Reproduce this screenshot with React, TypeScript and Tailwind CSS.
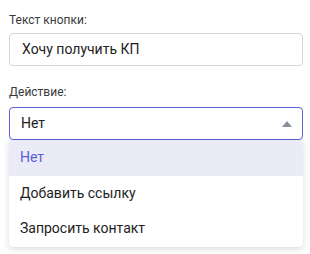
import React from "react";

const options = ["Нет", "Добавить ссылку", "Запросить контакт"];

export default function App() {
  const selected = "Нет";

  return (
    <div className="w-[310px] h-[254px] bg-white px-[9px] pt-[12px] font-['Roboto',sans-serif] text-[#222]">
      <div className="text-[12px] leading-[16px] text-[#3a3a3a]">Текст кнопки:</div>
      <div className="mt-[5px] h-[33px] w-[294px] rounded-[4px] border border-[#d6d6da] flex items-center px-[12px] text-[14px]">
        Хочу получить КП
      </div>

      <div className="mt-[18px] text-[12px] leading-[16px] text-[#3a3a3a]">Действие:</div>
      <div className="relative mt-[7px] w-[294px]">
        <div className="h-[33px] rounded-[4px] border border-[#5b5fd6] flex items-center justify-between pl-[11px] pr-[10px] text-[14px]">
          <span>{selected}</span>
          <svg width="10" height="6" viewBox="0 0 10 6">
            <path d="M0 6 L5 0 L10 6 Z" fill="#8b8e99" />
          </svg>
        </div>
        <div className="absolute left-0 right-0 top-[33px] bg-white rounded-b-[4px] shadow-[0_2px_6px_rgba(0,0,0,0.15)] overflow-hidden">
          {options.map((o) => (
            <div
              key={o}
              className={
                o === selected
                  ? "h-[35.5px] flex items-center px-[11px] text-[14px] bg-[#ebebf8] text-[#5b5fd6]"
                  : "h-[35.5px] flex items-center px-[11px] text-[14px] text-[#222]"
              }
            >
              {o}
            </div>
          ))}
        </div>
      </div>
    </div>
  );
}
